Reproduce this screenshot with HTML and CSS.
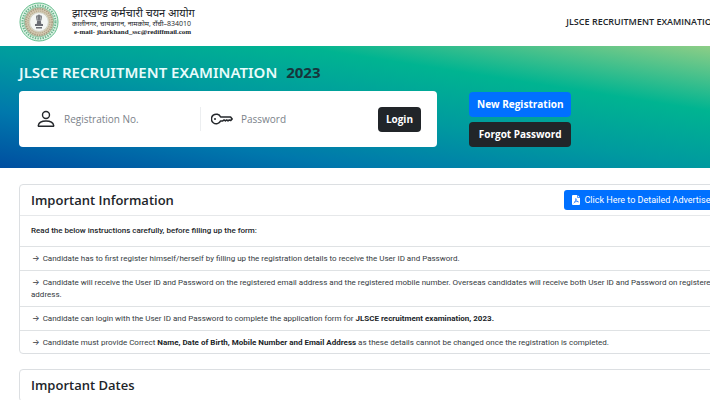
FILE: index.html
```html
<!DOCTYPE html>
<html lang="en">
<head>
<meta charset="utf-8">
<title>JLSCE Recruitment Examination 2023</title>
<link rel="stylesheet" href="styles.css">
</head>
<body>
<div class="page">
  <header class="topbar">
    <div class="brand">
      <svg class="emblem" viewBox="0 0 40 40" aria-hidden="true">
        <circle cx="20" cy="20" r="19" fill="#dff3e6" stroke="#62bd8b" stroke-width="1"/>
        <circle cx="20" cy="20" r="16.500" fill="none" stroke="#6ab58c" stroke-width="2" stroke-dasharray="1.400 1.200"/>
        <circle cx="20" cy="20" r="12.300" fill="none" stroke="#d3c8b0" stroke-width="5"/>
        <circle cx="20" cy="20" r="13.200" fill="none" stroke="#a59a80" stroke-width="1.600" stroke-dasharray="1.300 1.100"/>
        <circle cx="20" cy="20" r="11" fill="none" stroke="#b3a88e" stroke-width="1.200" stroke-dasharray="1 1.200"/>
        <circle cx="20" cy="20" r="14.900" fill="none" stroke="#5fae83" stroke-width=".6"/>
        <circle cx="20" cy="20" r="9.400" fill="#f3f6f4" stroke="#b5ad98" stroke-width=".5"/>
        <path d="M17 15q0-2 1.500-1.600Q20 11.800 21.500 13.400 23 13 23 15l-.6 3.500h-4.800z" fill="#777b80"/>
        <path d="M18.200 18.500h3.600l.5 3.500h-4.600zM16 22h8v2h-8zM17 25h6v1.500h-6z" fill="#6b6e75"/>
        <path d="M18.500 14.500v3M21.500 14.500v3" stroke="#d5d7d8" stroke-width=".5"/>
      </svg>
      <div class="brand-text" lang="hi">
        <span class="brand-name">झारखण्ड कर्मचारी चयन आयोग</span>
        <span class="brand-address">कालीनगर, चायबगान, नामकोम, राँची–834010</span>
        <span class="brand-mail">e-mail- jharkhand_ssc@rediffmail.com</span>
      </div>
    </div>
    <div class="topbar-title">JLSCE RECRUITMENT EXAMINATION</div>
  </header>

  <section class="hero">
    <h1 class="hero-title">JLSCE RECRUITMENT EXAMINATION <span class="year">2023</span></h1>
    <div class="hero-row">
      <form class="login">
        <div class="field field-user">
          <label for="reg" aria-label="Registration No.">
            <svg class="icon-user" viewBox="0 0 18 18" fill="none" stroke="#25282c" stroke-width="1.400" aria-hidden="true">
              <circle cx="9" cy="5" r="3.500"/>
              <path d="M1.900 16.300c-.5 0-.7-.3-.6-.9C1.800 12.600 4.500 11 9 11s7.200 1.600 7.700 4.400c.1.6-.1.9-.6.9z"/>
            </svg>
          </label>
          <input id="reg" type="text" placeholder="Registration No.">
        </div>
        <div class="field field-pass">
          <label for="pass" aria-label="Password">
            <svg class="icon-key" viewBox="0 0 22 12" fill="none" stroke="#25282c" stroke-width="1.500" stroke-linejoin="round" aria-hidden="true">
              <path d="M9.600 4H19.600L21.200 6 19.600 7.600 18.300 6.900 17 7.900 15.700 6.900 14.400 7.900 13.100 6.900 11.800 7.900H9.600A4.800 4.800 0 1 1 9.600 4z"/>
              <circle cx="4" cy="6" r="1" fill="#25282c" stroke="none"/>
            </svg>
          </label>
          <input id="pass" type="password" placeholder="Password">
        </div>
        <button class="btn btn-dark" type="button">Login</button>
      </form>
      <div class="hero-actions">
        <button class="btn btn-primary" type="button">New Registration</button>
        <button class="btn btn-dark" type="button">Forgot Password</button>
      </div>
    </div>
  </section>

  <main class="content">
    <section class="card">
      <div class="card-head">
        <h2>Important Information</h2>
        <a class="download" href="#">
          <svg class="icon-pdf" viewBox="0 0 8 10" aria-hidden="true">
            <path d="M1 0h4.500L8 2.500V9a1 1 0 0 1-1 1H1a1 1 0 0 1-1-1V1a1 1 0 0 1 1-1z" fill="#fff"/>
            <path d="M5.500 0v2.500H8M3.700 3.500c.7 1.700 1.300 3 2.900 3.600M3.900 3.500C4 5.200 3 7.200 1.700 8.300M2.300 7.100c1.300-.5 2.600-.7 4-.5" fill="none" stroke="#0d6efd" stroke-width=".7"/>
          </svg>
          Click Here to Detailed Advertisement
        </a>
      </div>
      <p class="intro">Read the below instructions carefully, before filling up the form:</p>
      <ul class="rules">
        <li>Candidate has to first register himself/herself by filling up the registration details to receive the User ID and Password.</li>
        <li>Candidate will receive the User ID and Password on the registered email address and the registered mobile number. Overseas candidates will receive both User ID and Password on registered email address.</li>
        <li>Candidate can login with the User ID and Password to complete the application form for <b>JLSCE recruitment examination, 2023.</b></li>
        <li>Candidate must provide Correct <b>Name, Date of Birth, Mobile Number and Email Address</b> as these details cannot be changed once the registration is completed.</li>
      </ul>
    </section>
    <section class="card">
      <div class="card-head">
        <h2>Important Dates</h2>
      </div>
    </section>
  </main>
</div>
</body>
</html>
```
FILE: styles.css
```css
* { box-sizing: border-box; }

body {
  margin: 0;
  overflow: hidden;
  background: #fff;
  color: #212529;
  font-family: "Open Sans", "Noto Sans", sans-serif;
  font-size: 8px;
  line-height: 12px;
}

h1, h2, p, ul { margin: 0; padding: 0; }

/* The sheet is wider than the viewport and runs past its right edge. */
.page { width: calc(100% + 68px); }

.topbar {
  display: flex;
  align-items: center;
  justify-content: space-between;
  height: 46px;
  padding: 0 59px 3px 19px;
}

.brand { display: flex; align-items: center; gap: 13px; }
.emblem { width: 40px; height: 40px; }
.brand-text { display: flex; flex-direction: column; white-space: nowrap; }
.brand-name { font-size: 11px; line-height: 13px; }
.brand-address { font-size: 7px; line-height: 9px; }
.brand-mail {
  padding-left: 2px;
  font: bold 7px/9px "Liberation Serif", serif;
}

.topbar-title { font-size: 9px; font-weight: 600; white-space: nowrap; }

.hero {
  padding: 16px 19px 21px;
  background: linear-gradient(to top right, #004ea0 0%, #0078ac 23%, #009a9f 46%, #00b491 69%, #8fce86 96%);
}

.hero-title {
  margin-bottom: 9px;
  color: #e8fbfb;
  font-family: "Noto Sans", sans-serif;
  font-size: 15px;
  font-weight: 600;
  line-height: 20px;
}
.year { margin-left: 5px; color: #17363c; font-weight: 700; }

.hero-row { display: flex; align-items: center; gap: 32px; }

.login {
  display: flex;
  align-items: center;
  flex: 0 0 418px;
  height: 56px;
  padding: 0 16px;
  border-radius: 4px;
  background: #fff;
}

.field { display: flex; align-items: center; gap: 8px; height: 24px; }
.field label { display: flex; }
.field input {
  flex: 1;
  min-width: 0;
  padding: 0;
  border: 0;
  outline: 0;
  background: none;
  color: #212529;
  font: 10px/16px "Open Sans", sans-serif;
}
.field input::placeholder { color: #7b828a; opacity: 1; }
.field-user { flex: 0 0 166px; gap: 9px; padding-left: 2px; border-right: 1px solid #eceef0; }
.field-pass { flex: 1; padding-left: 10px; }
.icon-user { width: 18px; height: 18px; }
.icon-key { width: 22px; height: 12px; }

.btn {
  height: 25px;
  padding: 0 8px;
  border: 0;
  border-radius: 4px;
  color: #fff;
  font: 700 10px/16px "Open Sans", sans-serif;
  white-space: nowrap;
}
.btn-dark { background: #212529; }
.btn-primary { background: #0070ff; }

.hero-actions { display: flex; flex-direction: column; gap: 5px; }

.content { display: grid; gap: 15px; padding: 16px 16px 0 19px; }

.card { border: 1px solid #dcdfe2; border-radius: 4px; }
.card-head {
  display: flex;
  align-items: center;
  justify-content: space-between;
  height: 31px;
  padding: 0 22px 0 11px;
  border-bottom: 1px solid #e6e8ea;
}
.card-head h2 { font-size: 13px; font-weight: 600; }

.download {
  display: flex;
  align-items: center;
  gap: 4px;
  height: 20px;
  padding: 0 8px;
  border-radius: 3px;
  background: #0070ff;
  color: #fff;
  font: 9px/12px Roboto, sans-serif;
  text-decoration: none;
  white-space: nowrap;
}
.icon-pdf { width: 8px; height: 10px; }

.intro {
  padding: 9px 11px;
  font-family: Roboto, sans-serif;
  font-weight: 500;
}

.rules { list-style: none; font-family: Roboto, sans-serif; color: #343a40; }
.rules li { padding: 6px 11px 5px; border-top: 1px solid #dfe2e4; }
.rules li:last-child { padding-bottom: 4px; }
.rules li::before {
  content: "→";
  margin: 0 3px 0 1px;
  font-family: Inter, sans-serif;
  line-height: 0;
}
.rules b { color: #212529; }
```
